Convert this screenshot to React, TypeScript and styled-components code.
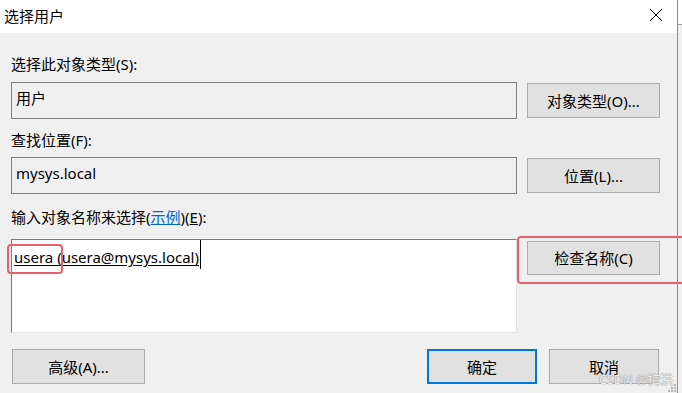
import React from "react";
import styled, { createGlobalStyle } from "styled-components";

const GlobalStyle = createGlobalStyle`
  html, body {
    margin: 0;
    padding: 0;
    background: #f0f0f0;
  }
  body {
    font-family: "Noto Sans", "Noto Sans CJK SC", sans-serif;
    font-size: 15px;
    color: #000;
  }
`;

const Page = styled.div`
  display: flex;
  width: 682px;
  height: 393px;
  overflow: hidden;
  position: relative;
`;

const Window = styled.div`
  width: 677px;
  height: 393px;
  border-right: 1px solid #8e8e8e;
  background: #f0f0f0;
  display: flex;
  flex-direction: column;
  flex-shrink: 0;
`;

const Edge = styled.div`
  flex: 1;
  display: flex;
  flex-direction: column;
  &::before {
    content: "";
    height: 24px;
    background: #fff;
    border-bottom: 1px solid #9a9a9a;
  }
`;

const TitleBar = styled.div`
  height: 33px;
  background: #fff;
  display: flex;
  align-items: center;
  justify-content: space-between;
  padding: 0 14px 0 4px;
  flex-shrink: 0;
`;

const Title = styled.span`
  font-size: 15px;
  line-height: 20px;
  margin-top: -2px;
`;

const CloseBtn = styled.div`
  width: 14px;
  height: 14px;
  display: flex;
  margin-top: -3px;
  svg {
    width: 14px;
    height: 14px;
  }
`;

const Body = styled.div`
  padding: 0 17px 0 11px;
  display: flex;
  flex-direction: column;
`;

const Label = styled.div<{ $top: number }>`
  margin-top: ${(p) => p.$top}px;
  height: 20px;
  line-height: 20px;
  white-space: nowrap;
`;

const Link = styled.span`
  color: #0066cc;
  text-decoration: underline;
`;

const Key = styled.span`
  text-decoration: underline;
`;

const Row = styled.div<{ $top: number }>`
  margin-top: ${(p) => p.$top}px;
  display: grid;
  grid-template-columns: 506px 133px;
  column-gap: 10px;
  align-items: center;
`;

const ReadOnlyBox = styled.div`
  height: 37px;
  box-sizing: border-box;
  border: 1px solid #7f7f7f;
  background: #f0f0f0;
  padding: 5px 4px 0;
  line-height: 20px;
`;

const NameBox = styled.div`
  height: 94px;
  box-sizing: border-box;
  background: #fff;
  border-top: 1px solid #7a7a7a;
  border-left: 1px solid #7a7a7a;
  border-right: 1px solid #e3e3e3;
  border-bottom: 1px solid #e3e3e3;
  padding: 7px 2px 0;
  line-height: 20px;
  position: relative;
`;

const Entry = styled.span`
  text-decoration: underline;
  text-underline-offset: 2px;
`;

const Caret = styled.span`
  display: inline-block;
  width: 1px;
  height: 29px;
  background: #000;
  vertical-align: top;
  margin-top: -7px;
  margin-left: 1px;
`;

const Button = styled.button<{ $w?: number; $h?: number; $default?: boolean }>`
  width: ${(p) => p.$w ?? 133}px;
  height: ${(p) => p.$h ?? 35}px;
  box-sizing: border-box;
  background: #e1e1e1;
  border: ${(p) => (p.$default ? "2px solid #0078d7" : "1px solid #adadad")};
  font-family: "Noto Sans", "Noto Sans CJK SC", sans-serif;
  font-size: 15px;
  color: #000;
  padding: 0;
  margin: 0;
  line-height: 20px;
`;

const TopButton = styled(Button)`
  align-self: start;
  margin-top: 2px;
`;

const Footer = styled.div`
  margin-top: 16px;
  display: flex;
  align-items: center;
  padding: 0 1px 0 1px;
  gap: 12px;
`;

const Spacer = styled.div`
  flex: 1;
`;

const Highlight = styled.div`
  position: absolute;
  border: 2px solid #e8606f;
  border-radius: 4px;
  box-sizing: border-box;
  pointer-events: none;
`;

const Watermark = styled.div`
  position: absolute;
  right: 9px;
  bottom: 7px;
  font-family: "Noto Sans", "Noto Sans CJK SC", sans-serif;
  font-size: 13px;
  line-height: 14px;
  color: rgba(255, 255, 255, 0.85);
  text-shadow: 0 0 1px #8a8a8a, 0 0 1px #8a8a8a;
  letter-spacing: -0.2px;
`;

const Grip = styled.svg`
  position: absolute;
  right: 5px;
  bottom: 0;
  width: 9px;
  height: 9px;
`;

export default function App() {
  return (
    <>
      <GlobalStyle />
      <Page>
        <Window>
          <TitleBar>
            <Title>选择用户</Title>
            <CloseBtn>
              <svg viewBox="0 0 14 14" fill="none" stroke="#000" strokeWidth="1">
                <path d="M1 1 L13 13 M13 1 L1 13" />
              </svg>
            </CloseBtn>
          </TitleBar>
          <Body>
            <Label $top={21}>选择此对象类型(S):</Label>
            <Row $top={8}>
              <ReadOnlyBox>用户</ReadOnlyBox>
              <Button>对象类型(O)...</Button>
            </Row>
            <Label $top={11}>查找位置(F):</Label>
            <Row $top={7}>
              <ReadOnlyBox>mysys.local</ReadOnlyBox>
              <Button>位置(L)...</Button>
            </Row>
            <Label $top={13}>
              输入对象名称来选择(<Link>示例</Link>)(<Key>E</Key>):
            </Label>
            <Row $top={12}>
              <NameBox>
                <Entry>usera (usera@mysys.local)</Entry>
                <Caret />
              </NameBox>
              <TopButton $h={34}>检查名称(C)</TopButton>
            </Row>
            <Footer>
              <Button>高级(A)...</Button>
              <Spacer />
              <Button $w={110} $default>确定</Button>
              <Button $w={110}>取消</Button>
            </Footer>
          </Body>
        </Window>
        <Edge />
        <Highlight style={{ left: 7, top: 244, width: 56, height: 30 }} />
        <Highlight style={{ left: 517, top: 236, width: 170, height: 48 }} />
        <Watermark>CSDN @梅洪</Watermark>
        <Grip viewBox="0 0 9 9">
          <rect x="6" y="0" width="2" height="2" fill="#b5b5b5" />
          <rect x="3" y="3" width="2" height="2" fill="#b5b5b5" />
          <rect x="6" y="3" width="2" height="2" fill="#b5b5b5" />
          <rect x="0" y="6" width="2" height="2" fill="#b5b5b5" />
          <rect x="3" y="6" width="2" height="2" fill="#b5b5b5" />
          <rect x="6" y="6" width="2" height="2" fill="#b5b5b5" />
        </Grip>
      </Page>
    </>
  );
}
